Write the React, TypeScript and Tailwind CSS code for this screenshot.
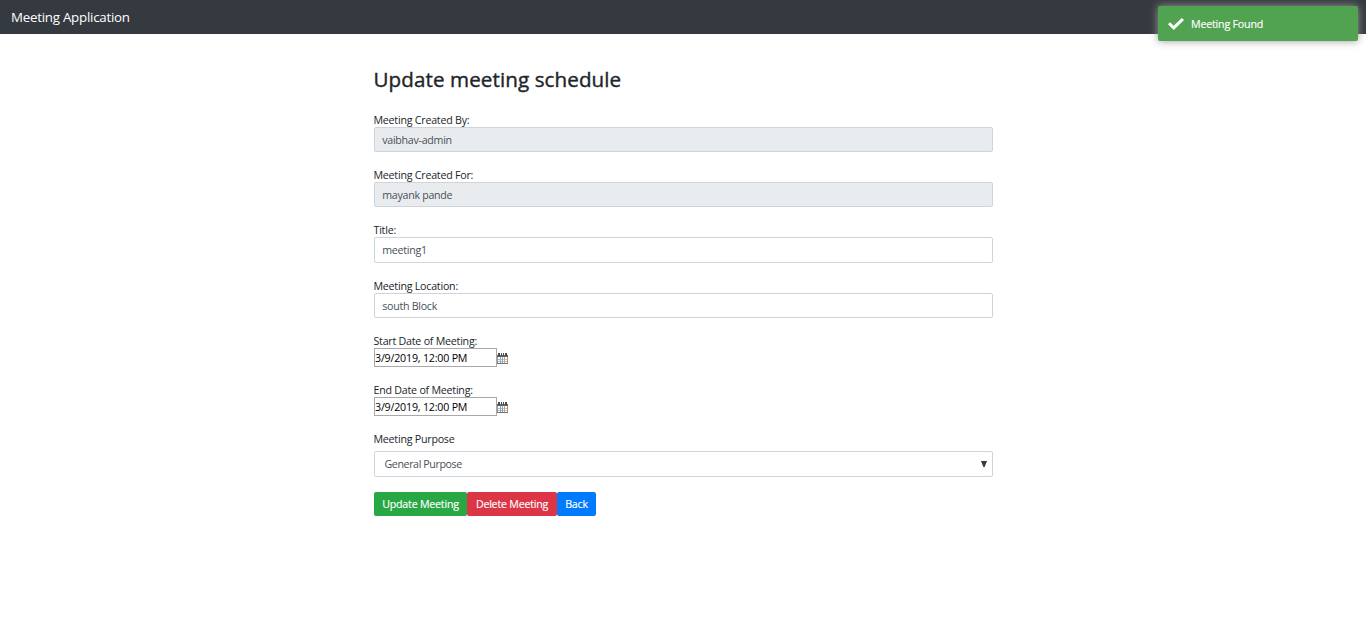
import type { ReactNode } from 'react';

function Label({ children }: { children: ReactNode }) {
  return <span className="-ml-[0.5px] block h-[15px] text-[10.67px] leading-[16px] tracking-[-0.23px] text-[#212529]">{children}</span>;
}

function Field({ label, value, disabled = false, className }: { label: string; value: string; disabled?: boolean; className: string }) {
  return (
    <label className={`flex flex-col ${className}`}>
      <Label>{label}</Label>
      <span
        className={`flex w-full flex-1 items-center rounded-[2px] border border-[#ced4da] px-[7.25px] text-[10.67px] tracking-[-0.28px] text-[#495057] ${disabled ? 'bg-[#e9ecef]' : 'bg-white'}`}
      >
        {value}
      </span>
    </label>
  );
}

function CalendarIcon() {
  return (
    <svg width="11" height="12" viewBox="0 0 11 12" shapeRendering="crispEdges" aria-hidden="true">
      <path d="M0 2h11v9H0z" fill="#9b9795" />
      <path d="M0 2h11v2H0z" fill="#6b6561" />
      <path d="M1 0h2v3H1zM4 0h1v3H4zM6 0h1v3H6zM8 0h2v3H8z" fill="#4d4844" />
      <path d="M1 4h2v2H1zM4 4h1v2H4zM6 4h1v2H6zM8 4h2v2H8zM1 7h2v1H1zM4 7h1v1H4zM6 7h1v1H6zM8 7h2v1H8zM1 9h2v1H1zM4 9h1v1H4zM6 9h1v1H6zM8 9h2v1H8z" fill="#fff" />
      <path d="M1 6h2v1H1zM1 8h2v1H1zM4 6h1v1H4zM4 8h1v1H4z" fill="#a9c3da" />
      <path d="M6 6h1v1H6zM8 6h2v1H8zM6 8h1v1H6zM8 8h2v1H8z" fill="#dfbfa9" />
      <path d="M3 4h1v6H3zM5 4h1v6H5z" fill="#82a9cc" />
      <path d="M7 4h1v6H7z" fill="#d99a78" />
      <path d="M0 10h11v1H0z" fill="#77726e" />
    </svg>
  );
}

function DateField({ label, value }: { label: string; value: string }) {
  return (
    <div className="mb-[15px] flex h-[34px] flex-col">
      <Label>{label}</Label>
      <div className="flex h-[19px]">
        <span className="flex h-[19px] w-[123px] items-center border border-[#a9a9a9] text-[10.67px] tracking-[-0.2px] text-black">{value}</span>
        <span className="pt-[5px]">
          <CalendarIcon />
        </span>
      </div>
    </div>
  );
}

export default function App() {
  return (
    <div className="relative min-h-[622px] bg-white font-['Open_Sans','Noto_Sans',sans-serif]">
      <header className="flex h-[34px] items-center bg-[#343a40] pt-[2px] pl-[11px] text-[13.33px] tracking-[-0.25px] text-white">
        Meeting Application
      </header>

      <div
        role="status"
        className="absolute top-[6px] right-[8px] flex h-[35px] w-[200px] items-center rounded-[2px] bg-[#51a351] pl-[10px] text-[10.67px] tracking-[-0.2px] text-white shadow-[0_0_8px_#999] [-webkit-text-stroke:0.15px_white]"
      >
        <svg width="16" height="12" viewBox="0 0 16 12" className="mr-[7px]" aria-hidden="true">
          <path d="M0 6.3 2.1 4.2 5.7 7.7 13.8 0 16 2.1 5.8 12Z" fill="#fff" />
        </svg>
        Meeting Found
      </div>

      <main className="ml-[374px] flex w-[619px] flex-col pt-[32px]">
        <h1 className="-ml-[0.5px] mb-[18px] h-[28px] text-[20.6px] leading-[27px] tracking-[0.09px] whitespace-nowrap text-[#212529] [-webkit-text-stroke:0.4px_#212529]">
          Update meeting schedule
        </h1>

        <Field label="Meeting Created By:" value="vaibhav-admin" disabled className="mb-[15px] h-[40px]" />
        <Field label="Meeting Created For:" value="mayank pande" disabled className="mb-[15px] h-[40px]" />
        <Field label="Title:" value="meeting1" className="mb-[15px] h-[41px]" />
        <Field label="Meeting Location:" value="south Block" className="mb-[15px] h-[40px]" />
        <DateField label="Start Date of Meeting:" value="3/9/2019, 12:00 PM" />
        <DateField label="End Date of Meeting:" value="3/9/2019, 12:00 PM" />

        <div className="mb-[15px] flex h-[46px] flex-col justify-between">
          <Label>Meeting Purpose</Label>
          <div className="flex h-[26px] items-center justify-between rounded-[2px] border border-[#ced4da] pr-[5px] pl-[9.5px] text-[10.67px] tracking-[-0.4px] text-[#495057]">
            General Purpose
            <svg width="6" height="6" viewBox="0 0 6 6" aria-hidden="true">
              <path d="M0 0h6L3.6 6H2.4Z" fill="#343a40" />
            </svg>
          </div>
        </div>

        <div className="flex h-[24px] text-[10.67px] tracking-[-0.22px] text-white [-webkit-text-stroke:0.15px_white]">
          <button className="w-[93px] rounded-[2px] bg-[#28a745] whitespace-nowrap">Update Meeting</button>
          <button className="w-[90px] rounded-[2px] bg-[#dc3545] whitespace-nowrap">Delete Meeting</button>
          <button className="w-[39px] rounded-[2px] bg-[#007bff]">Back</button>
        </div>
      </main>
    </div>
  );
}
